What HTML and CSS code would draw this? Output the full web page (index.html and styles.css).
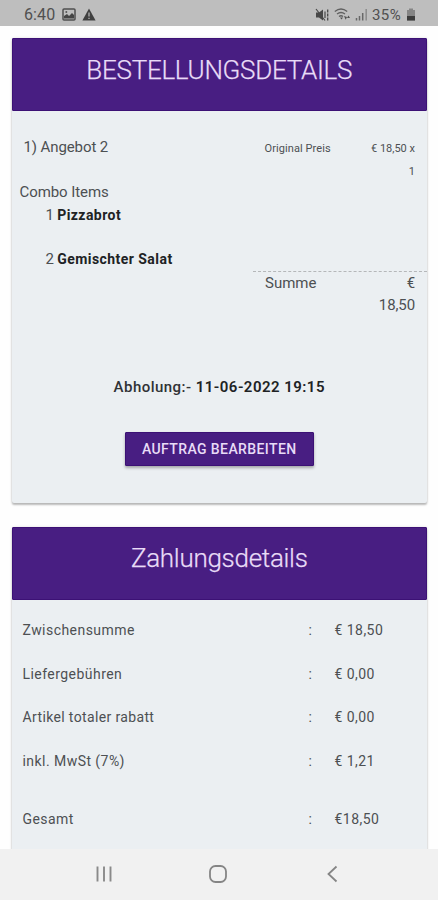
FILE: index.html
```html
<!DOCTYPE html>
<html lang="de">
<head>
<meta charset="utf-8">
<meta name="viewport" content="width=device-width">
<title>Bestellungsdetails</title>
<link rel="stylesheet" href="styles.css">
</head>
<body>
<div class="screen">
  <header class="status">
    <span class="clock">6:40</span>
    <svg class="photo" width="14" height="13" viewBox="0 0 14 13"><rect x="1" y="1" width="12" height="11" rx="1" fill="none" stroke="#505050" stroke-width="1.5"/><path d="M2 10.5V8l3-2 2 2 3-3 2 2v3.5z" fill="#454545"/><circle cx="4.3" cy="4" r="1" fill="#555"/></svg>
    <svg class="warn" width="14" height="13" viewBox="0 0 14 13"><path d="M7 .5L13.6 12.5H.4z" fill="#404040"/><path d="M7 4.5v4M7 9.7v1.3" stroke="#bdbdbd" stroke-width="1.2"/></svg>
    <svg class="mute" width="14" height="14" viewBox="0 0 14 14"><path d="M1 4.5h3L8 1.5v11L4 9.5H1z" fill="#484848"/><path d="M1 1l9 11.5M10 3.5v6.5" fill="none" stroke="#484848" stroke-width="1.2"/><path d="M12.7 1.5v11" stroke="#484848" stroke-width="1.3" stroke-dasharray="3 1"/></svg>
    <svg class="wifi" width="17" height="13" viewBox="0 0 17 13"><g fill="none" stroke="#606060" stroke-width="1.3"><path d="M.8 3.5Q7 -1.5 13.2 3.5M3 6Q7 3 11 6M5 8.5Q7 7 9 8.5"/></g><path d="M6 9.5h3l-1.5 2zM10 8l1.7 3.8L13 9zM13 10l1.5-2.5L16 10z" fill="#505050"/></svg>
    <svg class="signal" width="13" height="13" viewBox="0 0 13 13"><path d="M1.5 10v2.5M4.5 8v4.5M7.7 5v7.5" stroke="#686868" stroke-width="1.5"/><path d="M11.2 1v11.5" stroke="#8e8e8e" stroke-width="1.6"/></svg>
    <span class="percent">35%</span>
    <svg class="battery" width="10" height="13" viewBox="0 0 10 13"><path d="M3 .5h4v1.5h2V12.5H1V2h2z" fill="#858585"/><path d="M1 8h8v4.5H1z" fill="#3c3c3c"/></svg>
  </header>

  <main class="content">
    <section class="card order">
      <h1 class="card-title">BESTELLUNGSDETAILS</h1>
      <div class="order-body">
        <div class="item-row">
          <span class="item-name">1) Angebot 2</span>
          <span class="price-label">Original Preis</span>
          <span class="price">€ 18,50 x<br>1</span>
        </div>
        <div class="combo">
          <p class="combo-title">Combo Items</p>
          <p class="combo-item pizza">1 <b>Pizzabrot</b></p>
          <p class="combo-item salad">2 <b>Gemischter Salat</b></p>
        </div>
        <div class="sum"><span>Summe</span><span class="sum-value">€<br>18,50</span></div>
        <p class="pickup"><span>Abholung:- </span><b>11-06-2022 19:15</b></p>
        <button class="edit">AUFTRAG BEARBEITEN</button>
      </div>
    </section>

    <section class="card payment">
      <h2 class="card-title">Zahlungsdetails</h2>
      <div class="payment-body">
        <div class="row"><span>Zwischensumme</span><span>:</span><span>€ 18,50</span></div>
        <div class="row"><span>Liefergebühren</span><span>:</span><span>€ 0,00</span></div>
        <div class="row"><span class="discount">Artikel totaler rabatt</span><span>:</span><span>€ 0,00</span></div>
        <div class="row"><span>inkl. MwSt (7%)</span><span>:</span><span>€ 1,21</span></div>
        <div class="row total"><span>Gesamt</span><span>:</span><span>€18,50</span></div>
      </div>
    </section>
  </main>

  <nav class="nav">
    <svg width="18" height="18" viewBox="0 0 18 18"><path d="M3.5 1.5v15M10 1.5v15M16.5 1.5v15" stroke="#8a8a8a" stroke-width="1.9"/></svg>
    <svg width="20" height="20" viewBox="0 0 20 20"><rect x="1" y="2" width="16" height="16" rx="5.5" fill="none" stroke="#858585" stroke-width="1.8"/></svg>
    <svg width="14" height="18" viewBox="0 0 14 18"><path d="M11.5 1.5L3.5 9l8 7.5" fill="none" stroke="#858585" stroke-width="1.8"/></svg>
  </nav>
</div>
</body>
</html>
```
FILE: styles.css
```css
* { box-sizing: border-box; }
body { margin: 0; background: #fefefe; font-family: Roboto, "Liberation Sans", sans-serif; color: #4d5052; }
h1, h2, p { margin: 0; font-weight: 400; }
b { font-weight: 700; color: #202224; }
svg { display: block; flex: none; }
.screen { width: 438px; height: 900px; display: flex; flex-direction: column; overflow: hidden; }

.status { height: 26px; flex: none; display: flex; align-items: center; padding: 3px 22px 0 24px; background: #bebebe; color: #505050; font-size: 16px; line-height: 22px; }
.clock { width: 38px; letter-spacing: .1px; }
.warn { margin-left: 6px; }
.mute { margin-left: auto; }
.wifi { margin-left: 5px; }
.signal { margin-left: 4px; }
.percent { width: 31px; margin-left: 4px; font-size: 15px; letter-spacing: .4px; }
.battery { margin-left: 3px; }

.content { flex: 1; min-height: 0; overflow: hidden; padding: 12.4px 11px 0 11.5px; }
.card { background: #ebeff2; border-radius: 2px; box-shadow: 0 2px 2px rgba(0,0,0,.25), 0 0 3px rgba(0,0,0,.12); }
.card-title { height: 73px; padding-top: 14px; border: 1px solid #3c1175; border-radius: 1px; background: #481e82; color: #e8dcf7; text-align: center; font-size: 26px; line-height: 34px; font-weight: 300; letter-spacing: -.28px; -webkit-text-stroke: .25px #e8dcf7; }
.payment .card-title { padding-top: 13px; }
.order { height: 465px; }
.order-body { display: flex; flex-direction: column; align-items: stretch; }
.item-row { height: 70px; display: grid; grid-template-columns: 241px 96px 54.5px; padding: 25px 0 0 12px; line-height: 22px; }
.item-name { font-size: 15px; letter-spacing: -.1px; }
.price-label, .price { font-size: 11px; line-height: 22.5px; padding-top: 2px; white-space: nowrap; }
.price-label { letter-spacing: .08px; }
.price { text-align: right; }
.combo { height: 90px; padding-left: 8px; font-size: 15px; line-height: 22.3px; }
.combo-title { letter-spacing: -.08px; }
.combo-item { padding-left: 26px; }
.combo-item b { font-size: 14px; letter-spacing: .45px; margin-left: -.5px; }
.salad { margin-top: 22px; }
.sum { width: 174px; height: 50px; margin-left: auto; display: flex; justify-content: space-between; padding: 0 12px; border-top: 1px dashed #b5b7b9; font-size: 15px; line-height: 22px; }
.sum-value { text-align: right; letter-spacing: -.1px; }
.pickup { margin-top: 55px; text-align: center; color: #303235; font-size: 15px; line-height: 22px; font-weight: 500; letter-spacing: .47px; }
.pickup b { font-weight: 600; }
.edit { align-self: center; width: 189px; height: 34px; margin-top: 34px; padding: 0; border: 1px solid #3c1175; border-radius: 1px; background: #481e82; box-shadow: 0 2px 3px rgba(0,0,0,.3); color: #e8dcf7; font: 500 14px/32px Roboto, sans-serif; letter-spacing: .4px; }

.payment { height: 400px; margin-top: 24px; }
.payment-body { padding: 8.1px 0 0 11px; }
.row { display: grid; grid-template-columns: 286px 26px 1fr; height: 43.6px; align-items: center; font-size: 14px; line-height: 22px; letter-spacing: .45px; }
.discount { letter-spacing: .36px; }
.total { margin-top: 14.5px; }

.nav { height: 51px; flex: none; display: flex; align-items: center; justify-content: space-between; padding: 0 99px 2px 94px; background: #f1f1f1; }
```
